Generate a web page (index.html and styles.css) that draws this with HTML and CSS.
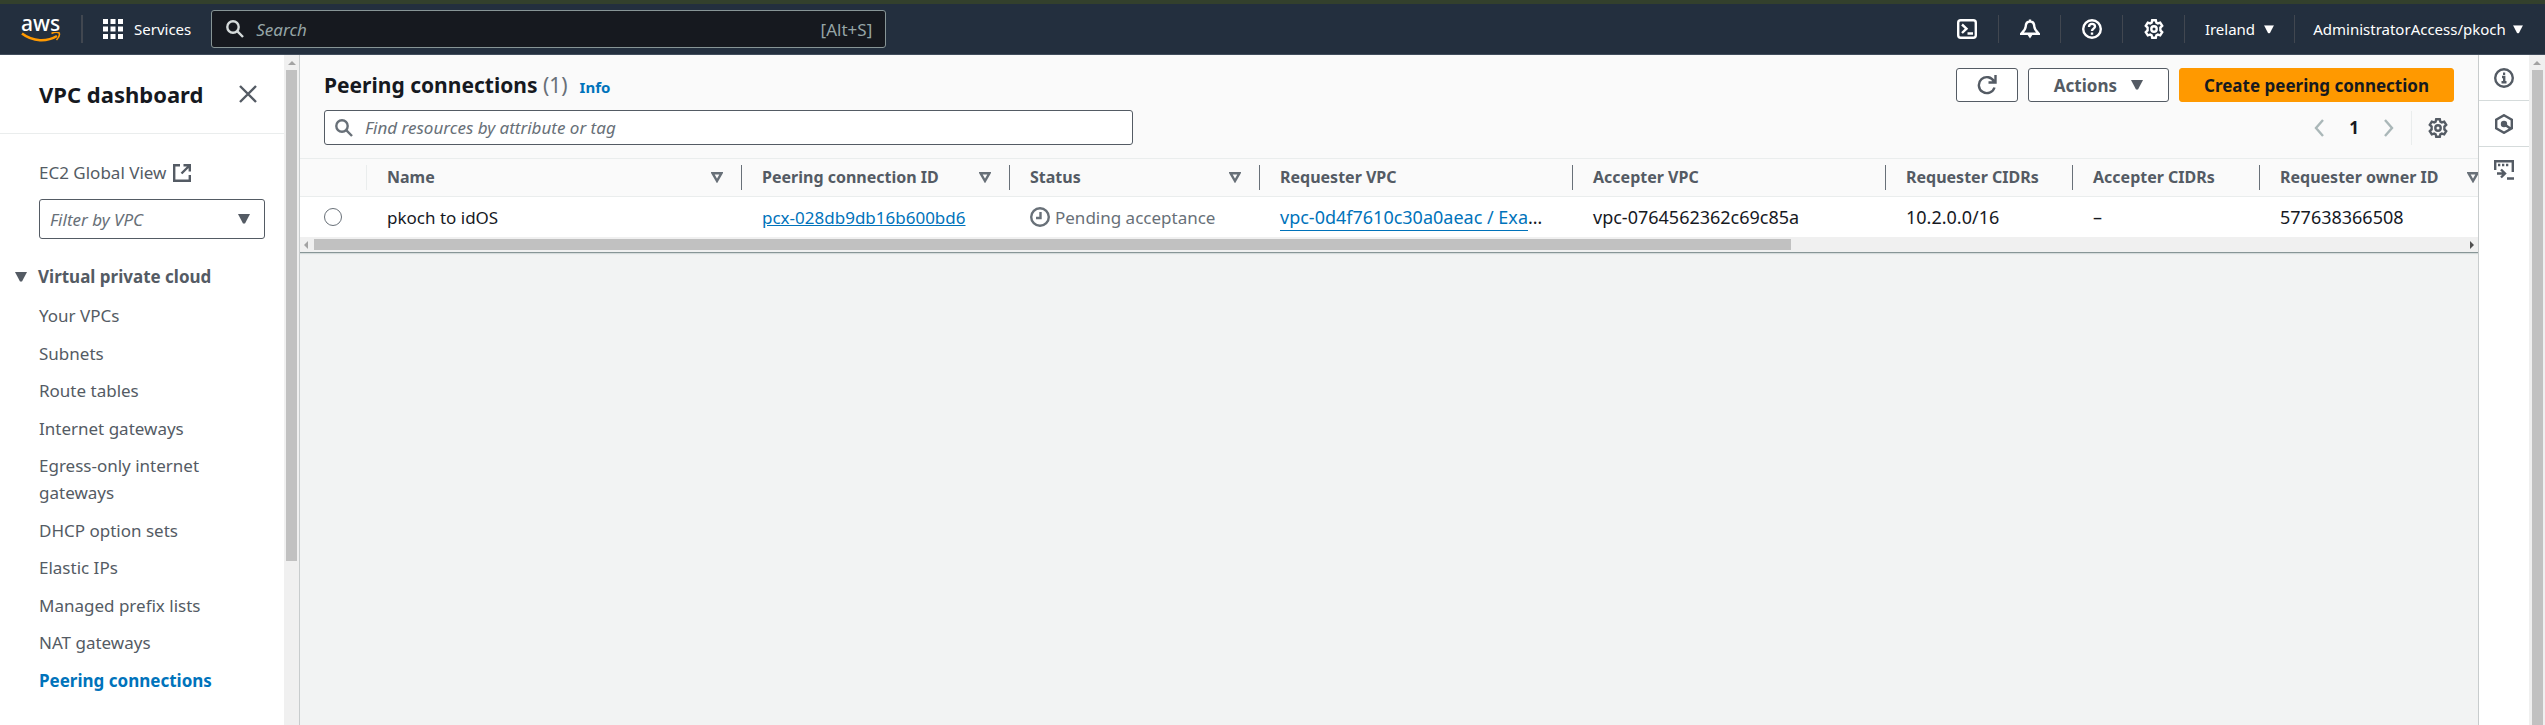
FILE: index.html
```html
<!DOCTYPE html>
<html lang="en">
<head>
<meta charset="utf-8">
<title>Peering connections | VPC Console</title>
<link rel="stylesheet" href="styles.css">
</head>
<body>
<svg class="defs" aria-hidden="true">
  <symbol id="gear" viewBox="0 0 20 20"><path d="M8.2 1.2h3.6l.6 2.5 1.4.8 2.4-.8 2 3.1-1.8 1.8v2.8l1.8 1.8-2 3.1-2.4-.8-1.4.8-.6 2.5H8.2l-.6-2.5-1.4-.8-2.4.8-2-3.1 1.8-1.8V8.600L1.800 6.800l2-3.100 2.400.8 1.400-.8z"/><circle cx="10" cy="10" r="2.700"/></symbol>
  <symbol id="search" viewBox="0 0 18 18"><circle cx="7" cy="7" r="5.700"/><path d="M11.200 11.200l5.800 5.800"/></symbol>
  <symbol id="sort" viewBox="0 0 12 11"><path d="M1.500 1.200h9L6 9z"/></symbol>
  <symbol id="caret" viewBox="0 0 12 10"><path d="M0 0h12L7 9.500H5z" stroke="none" fill="currentColor"/></symbol>
</svg>
<header class="topbar">
  <a class="logo" href="#" aria-label="AWS home"><span class="logo-text">aws</span>
    <svg class="smile" viewBox="0 0 40 10"><path d="M1 1.500c11 8.500 25 8.500 35 2.500" fill="none" stroke="#f90" stroke-width="2.600"/><path d="M30.500 1.500c3-1.500 6.500-1.200 7.700-.5.600 1.800-.6 5-2.700 7" fill="none" stroke="#f90" stroke-width="1.600"/></svg>
  </a>
  <button class="services" type="button">
    <svg class="i20" viewBox="0 0 20 20"><path fill="#fff" stroke="none" d="M0 0h5v5H0zM7.500 0h5v5h-5zM15 0h5v5h-5zM0 7.500h5v5H0zM7.500 7.500h5v5h-5zM15 7.500h5v5h-5zM0 15h5v5H0zM7.500 15h5v5h-5zM15 15h5v5h-5z"/></svg>
    Services
  </button>
  <label class="global-search">
    <svg class="i18"><use href="#search"/></svg>
    <input type="search" placeholder="Search" aria-label="Search">
    <span class="shortcut">[Alt+S]</span>
  </label>
  <nav class="tools">
    <button type="button" class="tool" aria-label="CloudShell"><svg class="i20" viewBox="0 0 20 20"><rect x="1.200" y="1.200" width="17.600" height="17.600" rx="2.500"/><path d="M5 5.500l4.500 4.200L5 14M10.500 14.500H16"/></svg></button>
    <button type="button" class="tool" aria-label="Notifications"><svg class="i20" viewBox="0 0 20 20"><path d="M10 2.500c-2.800 0-4.200 2.300-4.300 5-.1 3-2 4.500-4.500 7.200h17.600c-2.500-2.700-4.400-4.200-4.500-7.200-.1-2.700-1.500-5-4.300-5zM10 .5v2"/><path d="M7 15h6l-3 4.500z" fill="currentColor" stroke="none"/></svg></button>
    <button type="button" class="tool" aria-label="Help"><svg class="i20" viewBox="0 0 20 20"><circle cx="10" cy="10" r="8.800"/><path d="M7 8c0-4 6-4 6-.6 0 2.200-3 2.200-3 4.600M10 13.500v2.200"/></svg></button>
    <button type="button" class="tool" aria-label="Settings"><svg class="i20"><use href="#gear"/></svg></button>
    <button type="button" class="region">Ireland <svg class="small-caret" viewBox="0 0 12 10"><use href="#caret"/></svg></button>
    <button type="button" class="account">AdministratorAccess/pkoch <svg class="small-caret" viewBox="0 0 12 10"><use href="#caret"/></svg></button>
  </nav>
</header>
<div class="layout">
  <aside class="sidebar">
    <div class="side-content">
      <div class="side-head"><h2>VPC dashboard</h2>
        <button type="button" class="close" aria-label="Close"><svg class="i18" viewBox="0 0 18 18"><path d="M1 1l16 16M17 1L1 17"/></svg></button>
      </div>
      <div class="side-filter">
        <a href="#">EC2 Global View <svg class="i18" viewBox="0 0 18 18"><path d="M7 1.200H1.200v15.600h15.600V11M10.500 1.200h6.300v6.300M16.500 1.500L8.500 9.500"/></svg></a>
        <div class="select-wrap"><select aria-label="Filter by VPC"><option>Filter by VPC</option></select><svg class="caret"><use href="#caret"/></svg></div>
      </div>
      <button type="button" class="section"><svg class="caret"><use href="#caret"/></svg>Virtual private cloud</button>
      <ul class="side-nav">
        <li><a href="#">Your VPCs</a></li>
        <li><a href="#">Subnets</a></li>
        <li><a href="#">Route tables</a></li>
        <li><a href="#">Internet gateways</a></li>
        <li><a href="#">Egress-only internet gateways</a></li>
        <li><a href="#">DHCP option sets</a></li>
        <li><a href="#">Elastic IPs</a></li>
        <li><a href="#">Managed prefix lists</a></li>
        <li><a href="#">NAT gateways</a></li>
        <li><a href="#" class="current">Peering connections</a></li>
      </ul>
    </div>
    <div class="vbar"><svg class="up" viewBox="0 0 8 4"><path d="M0 4l4-4 4 4z"/></svg><div class="vthumb side-thumb"></div></div>
  </aside>
  <main class="main">
    <section class="panel">
      <div class="panel-head">
        <div class="title-row">
          <h1>Peering connections <span>(1)</span></h1><a class="info" href="#">Info</a>
          <div class="actions">
            <button type="button" class="btn refresh" aria-label="Refresh"><svg class="i20" viewBox="0 0 20 20"><path d="M17.500 12.500A8 8 0 1 1 17 6.500M18.500 0v7.500H11.500"/></svg></button>
            <button type="button" class="btn">Actions <svg class="caret"><use href="#caret"/></svg></button>
            <button type="button" class="btn primary">Create peering connection</button>
          </div>
        </div>
        <div class="tool-row">
          <label class="find"><svg class="i18"><use href="#search"/></svg><input type="search" placeholder="Find resources by attribute or tag" aria-label="Find resources"></label>
          <div class="pager">
            <button type="button" aria-label="Previous page"><svg class="chev" viewBox="0 0 10 18"><path d="M9 1L2 9l7 8"/></svg></button>
            <span class="page">1</span>
            <button type="button" aria-label="Next page"><svg class="chev" viewBox="0 0 10 18"><path d="M1 1l7 8-7 8"/></svg></button>
            <button type="button" class="prefs" aria-label="Preferences"><svg class="i20"><use href="#gear"/></svg></button>
          </div>
        </div>
      </div>
      <div class="table-wrap">
        <table>
          <colgroup><col class="c-pick"><col class="c-name"><col class="c-id"><col class="c-status"><col class="c-vpc"><col class="c-vpc"><col class="c-cidr"><col class="c-cidr"><col class="c-owner"></colgroup>
          <thead><tr>
            <th class="pick"></th>
            <th><div>Name <svg class="sort"><use href="#sort"/></svg></div></th>
            <th><div>Peering connection ID <svg class="sort"><use href="#sort"/></svg></div></th>
            <th><div>Status <svg class="sort"><use href="#sort"/></svg></div></th>
            <th><div>Requester VPC</div></th>
            <th><div>Accepter VPC</div></th>
            <th><div>Requester CIDRs</div></th>
            <th><div>Accepter CIDRs</div></th>
            <th><div>Requester owner ID <svg class="sort"><use href="#sort"/></svg></div></th>
          </tr></thead>
          <tbody><tr>
            <td class="pick"><input type="radio" name="row" aria-label="pkoch to idOS"></td>
            <td>pkoch to idOS</td>
            <td><a href="#">pcx-028db9db16b600bd6</a></td>
            <td><span class="status"><svg class="i20" viewBox="0 0 20 20"><circle cx="10" cy="10" r="8.800"/><path d="M10.500 5v6H6"/></svg>Pending acceptance</span></td>
            <td class="id"><a class="deep" href="#">vpc-0d4f7610c30a0aeac / Exa</a>…</td>
            <td class="id">vpc-0764562362c69c85a</td>
            <td class="id">10.2.0.0/16</td>
            <td class="id">–</td>
            <td class="id">577638366508</td>
          </tr></tbody>
        </table>
      </div>
      <div class="hbar"><svg class="side-arrow" viewBox="0 0 4 8"><path d="M4 0L0 4l4 4z"/></svg><div class="htrack"><div class="hthumb"></div></div><svg class="side-arrow dark" viewBox="0 0 4 8"><path d="M0 0l4 4-4 4z"/></svg></div>
    </section>
  </main>
  <nav class="rail">
    <button type="button" aria-label="Info"><svg class="i20" viewBox="0 0 20 20"><circle cx="10" cy="10" r="8.800"/><path d="M8 9h2.200v5M7.500 14.200h5M9 5.800h2.200"/></svg></button>
    <button type="button" aria-label="Diagnostics"><svg class="i20" viewBox="0 0 20 20"><path d="M10 1.200l7.800 4.400v8.800L10 18.800l-7.800-4.400V5.600zM10.500 10.500l6 4"/><circle cx="10" cy="10" r="2" fill="currentColor"/></svg></button>
    <button type="button" aria-label="CloudShell panel"><svg class="i20" viewBox="0 0 20 20"><path d="M1.200 10V1.200h17.600V12M3 13.500h7M7 9.500l4 4-4 4M13 18.500h7M4 5h2.300M8 5h2.300M12 5h2.300"/></svg></button>
  </nav>
  <div class="vbar page-bar"><svg class="up" viewBox="0 0 8 4"><path d="M0 4l4-4 4 4z"/></svg><div class="vthumb"></div></div>
</div>
</body>
</html>
```
FILE: styles.css
```css
* { box-sizing: border-box; }
body {
  margin: 0;
  height: 100vh;
  display: flex;
  flex-direction: column;
  overflow: hidden;
  font: 17px/27px "Noto Sans", sans-serif;
  color: #16191f;
  background: #f2f3f3;
}
button, input, select { font: inherit; color: inherit; }
button { background: none; border: 0; padding: 0; cursor: pointer; }
a { color: #0073bb; }
h1, h2 { margin: 0; font-size: 21px; line-height: 28px; }
h2 { font-size: 22px; }
ul { list-style: none; margin: 0; padding: 0; }
svg { fill: none; stroke: currentColor; stroke-width: 2.4; flex: none; }
input::placeholder { color: #687078; opacity: 1; font-style: italic; }
.defs { display: none; }
.i20 { width: 20px; height: 20px; }
.i18 { width: 18px; height: 18px; }
.caret { width: 12px; height: 10px; }
.small-caret { width: 10px; height: 9px; }

/* Top bar */
.topbar {
  flex: none;
  height: 55px;
  display: flex;
  align-items: center;
  background: #232f3e;
  border-top: 4px solid #33402c;
  border-bottom: 1px solid #414d5c;
  color: #fff;
  font-size: 15px;
}
.logo {
  width: 83px;
  height: 28px;
  padding-left: 21px;
  border-right: 2px solid #414750;
  color: #fff;
  text-decoration: none;
  display: flex;
  flex-direction: column;
}
.logo-text { font-size: 21px; line-height: 17px; font-weight: 500; }
.smile { width: 40px; height: 10px; }
.services { display: flex; align-items: center; gap: 11px; padding: 0 20px; }
.global-search {
  width: 675px;
  height: 38px;
  display: flex;
  align-items: center;
  gap: 12px;
  padding: 0 13px 0 14px;
  background: #16191f;
  border: 1px solid #879596;
  border-radius: 3px;
  color: #d5dbdb;
}
.global-search input { flex: 1; min-width: 0; border: 0; padding: 0; background: none; outline: 0; font-size: 17px; }
.global-search input::placeholder, .shortcut { color: #95a5a6; }
.shortcut { font-size: 17px; }
.tools { margin-left: auto; display: flex; align-items: center; }
.tools button { height: 28px; display: flex; align-items: center; justify-content: center; }
.tools button + button { border-left: 1px solid #414750; }
.tool { width: 62px; }
.region { width: 110px; gap: 9px; }
.account { width: 251px; gap: 7px; padding-right: 4px; }

/* Frame */
.layout { flex: 1; min-height: 0; display: flex; }
.sidebar { width: 299px; display: flex; background: #fff; color: #545b64; flex: none; }
.side-content { flex: 1; min-width: 0; }
.vbar { width: 15px; flex: none; background: #f0f0f0; display: flex; flex-direction: column; align-items: center; padding-top: 6px; gap: 5px; }
.up { width: 8px; height: 4px; fill: #a3a3a3; stroke: none; }
.vthumb { width: 11px; flex: 1; background: #c1c1c1; }
.side-thumb { flex: 0 0 74%; }
.page-bar { width: 16px; }

/* Side navigation */
.side-head { height: 79px; display: flex; align-items: center; justify-content: space-between; padding: 0 27px 0 39px; border-bottom: 1px solid #eaeded; color: #16191f; }
.close { display: flex; color: #545b64; }
.side-filter { padding: 25px 19px 24px 39px; display: flex; flex-direction: column; gap: 13px; }
.side-filter a { display: flex; align-items: center; gap: 7px; color: inherit; text-decoration: none; }
.select-wrap { display: grid; align-items: center; }
.select-wrap select, .select-wrap svg { grid-area: 1 / 1; }
.select-wrap select { appearance: none; height: 40px; border: 1px solid #545b64; border-radius: 3px; background: #fff; padding: 0 10px; font-style: italic; color: #687078; }
.select-wrap svg { justify-self: end; margin-right: 15px; pointer-events: none; }
.section { display: flex; align-items: center; gap: 11px; padding-left: 15px; font-weight: 700; }
.side-nav { padding: 12px 39px 0; }
.side-nav li { margin-bottom: 10px; }
.side-nav li:nth-child(odd) { margin-bottom: 11px; }
.side-nav a { display: block; color: inherit; text-decoration: none; }
.side-nav .current { color: #0073bb; font-weight: 700; }

/* Resource panel */
.main { flex: 1; min-width: 0; border-left: 1px solid #c8cccd; }
.panel { background: #fff; border-bottom: 1px solid #879596; box-shadow: 0 1px 1px #d5dbdb; }
.panel-head { background: #fafafa; padding: 13px 24px; border-bottom: 1px solid #eaeded; }
.title-row { display: flex; align-items: center; height: 34px; }
h1 span { font-weight: 400; color: #687078; }
.info { font-size: 15px; font-weight: 700; text-decoration: none; margin: 4px 0 0 12px; }
.actions { margin-left: auto; display: flex; gap: 10px; }
.btn { height: 34px; display: flex; align-items: center; gap: 14px; padding: 0 25px; background: #fff; border: 1px solid #545b64; border-radius: 3px; color: #545b64; font-weight: 700; }
.refresh { padding: 0 20px; }
.primary { padding: 0 24px; background: #f90; border-color: #f90; color: #16191f; }
.tool-row { display: flex; justify-content: space-between; margin-top: 8px; }
.find { flex: 0 1 38%; height: 35px; display: flex; align-items: center; gap: 12px; padding: 0 10px; background: #fff; border: 1px solid #545b64; border-radius: 3px; color: #687078; }
.find input { flex: 1; min-width: 0; border: 0; padding: 0; background: none; outline: 0; }
.pager { display: flex; align-items: center; color: #aab7b8; }
.pager button { display: flex; }
.chev { width: 10px; height: 18px; }
.page { width: 60px; text-align: center; font-weight: 700; color: #16191f; }
.pager .prefs { height: 34px; align-items: center; margin-left: 17px; padding: 0 6px 0 16px; border-left: 1px solid #eaeded; color: #545b64; }

/* Table */
.table-wrap { overflow: hidden; }
table { width: 2197px; table-layout: fixed; border-collapse: separate; border-spacing: 0; }
.c-pick { width: 66px; }
.c-name { width: 375px; }
.c-id { width: 268px; }
.c-status { width: 250px; }
.c-vpc { width: 313px; }
.c-cidr { width: 187px; }
th { height: 38px; padding: 0; background: #fafafa; border-bottom: 1px solid #eaeded; color: #545b64; font-size: 16px; text-align: left; white-space: nowrap; }
th div { height: 25px; line-height: 25px; padding: 0 18px 0 20px; border-left: 1px solid #687078; display: flex; align-items: center; justify-content: space-between; }
.pick + th div { border-left-color: #eaeded; }
.sort { width: 12px; height: 11px; color: #687078; }
td { height: 40px; padding: 0 20px 0 21px; white-space: nowrap; }
td.id { font-size: 18px; padding-right: 0; }
td.pick { padding: 0 0 0 24px; }
.pick input { appearance: none; display: block; width: 18px; height: 18px; margin: 0; border: 1px solid #687078; border-radius: 50%; background: #fff; }
.status { display: flex; align-items: center; gap: 5px; color: #687078; }
.deep { text-underline-offset: 6px; }
.hbar { height: 15px; background: #f0f0f0; display: flex; align-items: center; gap: 6px; padding: 0 4px; }
.htrack { flex: 1; }
.hthumb { width: 68.7%; height: 11px; background: #c1c1c1; }
.side-arrow { width: 4px; height: 8px; fill: #a3a3a3; stroke: none; }
.dark { fill: #505050; }

/* Right rail */
.rail { width: 51px; flex: none; background: #fff; border-left: 1px solid #c8cccd; color: #545b64; }
.rail button { width: 100%; height: 46px; display: flex; align-items: center; justify-content: center; border-bottom: 1px solid #d5dbdb; }
.rail button:last-child { border-bottom: 0; }
```
